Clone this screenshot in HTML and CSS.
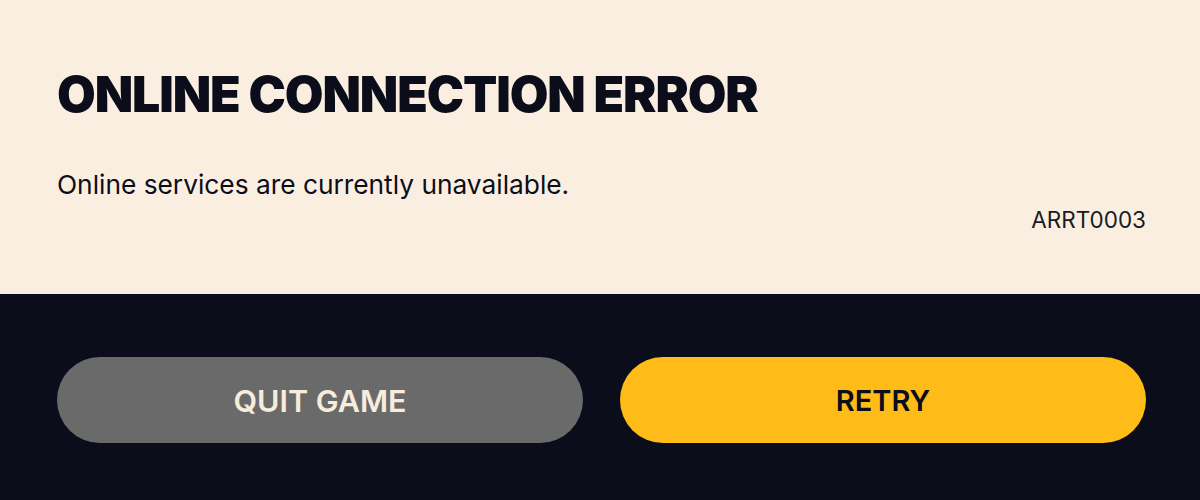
FILE: index.html
```html
<!DOCTYPE html>
<html lang="en">
<head>
    <meta charset="UTF-8">
    <title>Online Connection Error</title>
    <link rel="stylesheet" href="styles.css">
</head>
<body>
    <div class="dialog">
        <!-- Message area -->
        <div class="message">
            <h1 class="title">ONLINE CONNECTION ERROR</h1>
            <p class="text">Online services are currently unavailable.</p>
            <div class="code">ARRT0003</div>
        </div>

        <!-- Actions -->
        <div class="actions">
            <button class="btn btn-quit">QUIT GAME</button>
            <button class="btn btn-retry">RETRY</button>
        </div>
    </div>
</body>
</html>
```

FILE: styles.css
```css
body {
    margin: 0;
    background-color: #0b0e1a;
    font-family: "Inter", "Liberation Sans", sans-serif;
}
.dialog {
    width: 1200px;
    height: 500px;
    display: flex;
    flex-direction: column;
}
.message {
    background-color: #faeee0;
    height: 294px;
    box-sizing: border-box;
    padding: 67px 54px 0 57px;
}
.title {
    margin: 0;
    font-size: 50px;
    line-height: 54px;
    font-weight: 900;
    color: #0b0e1a;
    letter-spacing: -1.1px;
}
.text {
    margin: 49px 0 0;
    font-size: 26.3px;
    line-height: 30px;
    color: #0b0e1a;
}
.code {
    text-align: right;
    font-size: 22.5px;
    line-height: 24px;
    color: #1a1a1f;
    margin-top: 8px;
}
.actions {
    display: flex;
    gap: 37px;
    padding: 63px 54px 0 57px;
}
.btn {
    flex: 1;
    height: 86px;
    border: none;
    border-radius: 43px;
    font-family: "Inter", "Liberation Sans", sans-serif;
    font-size: 29px;
    font-weight: 600;
    cursor: pointer;
}
.btn-quit {
    background-color: #6b6a6b;
    color: #f7eddc;
    font-size: 30.5px;
}
.btn-retry {
    background-color: #ffbb17;
    color: #0b0e1a;
}
```
